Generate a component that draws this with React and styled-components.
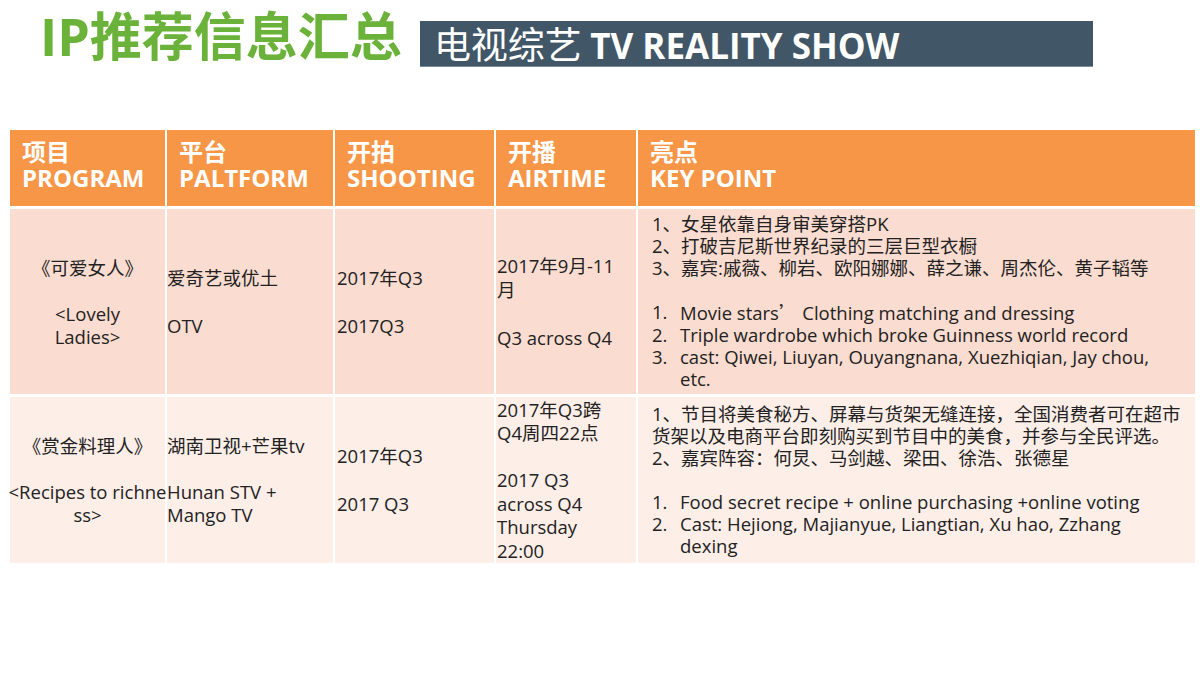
import styled, { createGlobalStyle } from "styled-components";

const GlobalStyle = createGlobalStyle`
  html, body {
    margin: 0;
    padding: 0;
    background: #ffffff;
  }
  body {
    font-family: "Open Sans", "Noto Sans CJK SC", sans-serif;
    color: #222222;
  }
`;

const Page = styled.div`
  width: 1200px;
  height: 675px;
  overflow: hidden;
  box-sizing: border-box;
  padding-top: 5px;
`;

const TitleRow = styled.div`
  display: flex;
  align-items: flex-start;
  gap: 18px;
  padding-left: 40px;
`;

const Title = styled.h1`
  margin: 0;
  font-family: "Open Sans", "Noto Sans CJK SC", sans-serif;
  font-size: 52px;
  font-weight: 700;
  line-height: 62px;
  color: #6bb23b;
  white-space: nowrap;
`;

const Banner = styled.div`
  margin-top: 16px;
  width: 673px;
  height: 46px;
  box-sizing: border-box;
  padding-left: 14px;
  background: #415666;
  border-bottom: 1px solid #7d8d99;
  color: #ffffff;
  font-size: 37px;
  line-height: 45px;
  white-space: nowrap;

  .cn {
    font-family: "Noto Sans CJK SC", sans-serif;
    font-weight: 400;
  }
  .en {
    font-family: "Open Sans", sans-serif;
    font-weight: 700;
    font-size: 35px;
  }
`;

const Table = styled.div`
  margin: 63px 0 0 10px;
  width: 1185px;
  display: grid;
  grid-template-columns: 155px 166px 159px 140px 557px;
  grid-template-rows: 76px 185px 166px;
  column-gap: 2px;
  row-gap: 3px;
  background: #ffffff;
`;

const HeadCell = styled.div`
  background: #f79646;
  color: #ffffff;
  font-weight: 700;
  font-size: 24px;
  line-height: 26px;
  padding: 0 12px 6px;
  display: flex;
  flex-direction: column;
  justify-content: center;
  white-space: nowrap;
`;

const Cell = styled.div`
  background: ${(p) => (p.$band === 2 ? "#fdeee8" : "#fbdcd0")};
  font-size: 18.5px;
  line-height: ${(p) => p.$lh || 24}px;
  padding: ${(p) => p.$pad || "0"};
  text-align: ${(p) => (p.$center ? "center" : "left")};
  display: flex;
  flex-direction: column;
  justify-content: center;
  align-items: ${(p) => (p.$center ? "center" : "stretch")};
  white-space: nowrap;
  color: #222222;
`;

const Line = styled.div`
  min-height: 1em;
  height: ${(p) => (p.$blank ? "1lh" : "auto")};
`;

const Item = styled.div`
  display: grid;
  grid-template-columns: 28px 1fr;
`;

const Wide = styled.span`
  font-family: "Noto Sans CJK SC", sans-serif;
`;

const headers = [
  ["项目", "PROGRAM"],
  ["平台", "PALTFORM"],
  ["开拍", "SHOOTING"],
  ["开播", "AIRTIME"],
  ["亮点", "KEY POINT"],
];

function Lines({ rows }) {
  return rows.map((r, i) =>
    r === "" ? <Line key={i} $blank /> : <Line key={i}>{r}</Line>
  );
}

function List({ items }) {
  return items.map((lines, i) => (
    <Item key={i}>
      <span>{i + 1}.</span>
      <div>
        {lines.map((l, j) => (
          <div key={j}>{l}</div>
        ))}
      </div>
    </Item>
  ));
}

export default function App() {
  return (
    <Page>
      <GlobalStyle />
      <TitleRow>
        <Title>IP推荐信息汇总</Title>
        <Banner>
          <span className="cn">电视综艺 </span>
          <span className="en">TV REALITY SHOW</span>
        </Banner>
      </TitleRow>

      <Table>
        {headers.map(([cn, en]) => (
          <HeadCell key={en}>
            <div>{cn}</div>
            <div>{en}</div>
          </HeadCell>
        ))}

        {/* 可爱女人 */}
        <Cell $center $lh={23}>
          <Lines rows={["《可爱女人》", "", "<Lovely", "Ladies>"]} />
        </Cell>
        <Cell>
          <Lines rows={["爱奇艺或优土", "", "OTV"]} />
        </Cell>
        <Cell $pad="0 0 0 2px">
          <Lines rows={["2017年Q3", "", "2017Q3"]} />
        </Cell>
        <Cell $pad="0 0 0 1px">
          <Lines rows={["2017年9月-11", "月", "", "Q3 across Q4"]} />
        </Cell>
        <Cell $lh={22} $pad="0 0 0 14px">
          <Lines
            rows={[
              "1、女星依靠自身审美穿搭PK",
              "2、打破吉尼斯世界纪录的三层巨型衣橱",
              "3、嘉宾:戚薇、柳岩、欧阳娜娜、薛之谦、周杰伦、黄子韬等",
              "",
            ]}
          />
          <List
            items={[
              [<>Movie stars<Wide>’</Wide> Clothing matching and dressing</>],
              ["Triple wardrobe which broke Guinness world record"],
              ["cast: Qiwei, Liuyan, Ouyangnana, Xuezhiqian, Jay chou,", "etc."],
            ]}
          />
        </Cell>

        {/* 赏金料理人 */}
        <Cell $band={2} $center $lh={23}>
          <Lines rows={["《赏金料理人》", "", "<Recipes to richne", "ss>"]} />
        </Cell>
        <Cell $band={2} $lh={23}>
          <Lines rows={["湖南卫视+芒果tv", "", "Hunan STV +", "Mango TV"]} />
        </Cell>
        <Cell $band={2} $pad="0 0 0 2px">
          <Lines rows={["2017年Q3", "", "2017 Q3"]} />
        </Cell>
        <Cell $band={2} $lh={23.5} $pad="0 0 0 1px">
          <Lines
            rows={["2017年Q3跨", "Q4周四22点", "", "2017 Q3", "across Q4", "Thursday", "22:00"]}
          />
        </Cell>
        <Cell $band={2} $lh={22} $pad="0 0 0 14px">
          <Lines
            rows={[
              "1、节目将美食秘方、屏幕与货架无缝连接，全国消费者可在超市",
              "货架以及电商平台即刻购买到节目中的美食，并参与全民评选。",
              "2、嘉宾阵容：何炅、马剑越、梁田、徐浩、张德星",
              "",
            ]}
          />
          <List
            items={[
              ["Food secret recipe + online purchasing +online voting"],
              ["Cast: Hejiong, Majianyue, Liangtian, Xu hao, Zzhang", "dexing"],
            ]}
          />
        </Cell>
      </Table>
    </Page>
  );
}
